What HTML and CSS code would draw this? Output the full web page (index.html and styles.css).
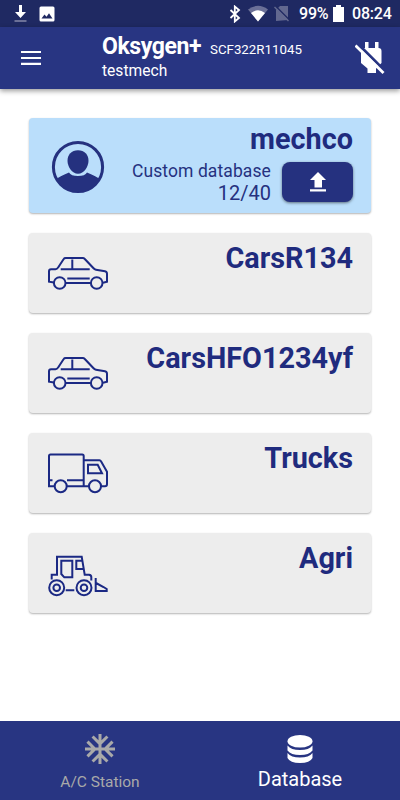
FILE: index.html
```html
<!DOCTYPE html>
<html lang="en">
<head>
    <meta charset="UTF-8">
    <title>Oksygen+</title>
    <link rel="stylesheet" href="styles.css">
</head>
<body>
<div class="status">
    <svg class="st-down" width="14" height="18" viewBox="0 0 14 18"><path d="M5 0h3v7h4l-5.500 6L1 7h4z" fill="#fff"/><path d="M.5 16h12" stroke="#6b7097" stroke-width="2"/></svg>
    <svg class="st-pic" width="16" height="16" viewBox="0 0 16 16"><rect x=".5" y=".5" width="15" height="15" rx="1.500" fill="#fff"/><path d="M2.500 12.500 5.500 8.500 7.500 10.800 10 7.200 13.500 12.500z" fill="#1f2962"/></svg>
    <svg class="st-bt" width="12" height="18" viewBox="0 0 12 18"><path d="M1.500 5 10 13 5.800 16.500V1.500L10 5 1.500 13" fill="none" stroke="#fff" stroke-width="1.800"/></svg>
    <svg class="st-wifi" width="20" height="17" viewBox="0 0 20 17"><path d="M0 4.500Q10-3 20 4.500L10 16.500z" fill="#6b7097"/><path d="M3 8Q10 2.500 17 8L10 16.500z" fill="#fff"/></svg>
    <svg class="st-sim" width="16" height="17" viewBox="0 0 16 17"><path d="M6 1h8v14L2 16V5z" fill="#62688f"/><path d="M1.500 1 15.500 15" stroke="#1f2962" stroke-width="1.500"/><path d="M.5 2 14.500 16" stroke="#62688f" stroke-width="1.500"/></svg>
    <span class="st-text">99%</span>
    <svg class="st-bat" width="11" height="17" viewBox="0 0 11 17"><path d="M3 0h5v2h3v15H0V2h3z" fill="#fff"/></svg>
    <span class="st-text">08:24</span>
</div>
<div class="header">
    <svg class="menu" width="20" height="14" viewBox="0 0 20 14"><path d="M0 1h20M0 7h20M0 12.800h20" stroke="#fff" stroke-width="2.200"/></svg>
    <div class="title">
        <div class="title-top"><b>Oksygen+</b><span>SCF322R11045</span></div>
        <div class="user">testmech</div>
    </div>
    <svg class="plug" width="30" height="32" viewBox="0 0 30 32">
        <path d="M10 0h3.500v6H20V0h3.500v6q3 0 3 3v12l-5.500 5.500v4.500h-8.500v-4.500L6 21V10q0-4 4-4z" fill="#fff"/>
        <path d="M1.500.5 30 29" stroke="#283582" stroke-width="3"/>
        <path d="M.5 3.500 28.500 31" stroke="#fff" stroke-width="2.800"/>
    </svg>
</div>
<div class="main">
    <div class="card custom">
        <svg class="avatar" width="54" height="54" viewBox="0 0 54 54">
            <circle cx="27" cy="27" r="24.600" fill="none" stroke="#25317f" stroke-width="3"/>
            <path d="M27 10.300c6.500 0 10.500 4.500 10.500 10.500S33 33.800 27 33.800 16.500 26.800 16.500 20.800 20.500 10.300 27 10.300z" fill="#25317f"/>
            <path d="M5.500 39Q8 36.500 18 32.500Q20 36 27 36T36 32.500Q46 36.500 48.500 39A24.600 24.600 0 0 1 5.500 39z" fill="#25317f"/>
        </svg>
        <div class="custom-info">
            <div class="name">mechco</div>
            <div class="custom-row">
                <div class="count">
                    <div class="label">Custom database</div>
                    <div class="num">12/40</div>
                </div>
                <div class="upload"><svg width="16" height="20" viewBox="0 0 16 20"><path d="M8 0 16 8h-4v7.500H4.500V8H0zM0 17.200h16v2.300H0z" fill="#fff"/></svg></div>
            </div>
        </div>
    </div>
    <div class="card">
        <svg class="icon" width="60" height="44" viewBox="0 0 60 44">
            <path d="M6 29.500 1 28.700V18.500Q1 16.300 3 16.300H7.500Q9 16.300 10.300 14.300L15.700 6Q16.300 5 17.700 5H34.700Q36 5 36.800 6L45.300 15Q46.500 16.400 48 16.700L57 18.300Q59 18.800 59 20.700V28.700L55 29.700M12.700 16.200H41.700M24.300 6.500V16M19.300 25.500H41.700M17.700 30H42.700"/>
            <circle cx="11.700" cy="30" r="5.800"/><circle cx="48.700" cy="30" r="5.800"/>
        </svg>
        <div class="name">CarsR134</div>
    </div>
    <div class="card">
        <svg class="icon" width="60" height="44" viewBox="0 0 60 44">
            <path d="M6 29.500 1 28.700V18.500Q1 16.300 3 16.300H7.500Q9 16.300 10.300 14.300L15.700 6Q16.300 5 17.700 5H34.700Q36 5 36.800 6L45.300 15Q46.500 16.400 48 16.700L57 18.300Q59 18.800 59 20.700V28.700L55 29.700M12.700 16.200H41.700M24.300 6.500V16M19.300 25.500H41.700M17.700 30H42.700"/>
            <circle cx="11.700" cy="30" r="5.800"/><circle cx="48.700" cy="30" r="5.800"/>
        </svg>
        <div class="name">CarsHFO1234yf</div>
    </div>
    <div class="card">
        <svg class="icon" width="60" height="44" viewBox="0 0 60 44">
            <path d="M6.500 33.200H1V3Q1 1.500 2.500 1.500H34.200Q35.700 1.500 35.700 3V33M35.700 7.300H51.500Q52.500 7.300 53 8.300L59 18.700V31Q59 33.200 57 33.200H53M1 27.300H4.500M19 27.300H35.700M19 33.200H41M40 11.700H49.700L54 20.300H40z"/>
            <circle cx="12.700" cy="33.300" r="6"/><circle cx="47" cy="33.300" r="6"/>
        </svg>
        <div class="name">Trucks</div>
    </div>
    <div class="card">
        <svg class="icon" width="60" height="44" viewBox="0 0 60 44">
            <path d="M3.700 26.500V21.700H9V3.700H33.700L36.700 21.700H41Q43.300 22 43.300 24V27.500M13.300 7.700H24.300V24.300H16.300L13.300 21zM33.700 7.700H28.300V16H35.500M17.700 37.300H26.300M47.700 25V38H58.700V36L55.500 34 48 30"/>
            <circle cx="8.700" cy="34.700" r="7.500"/><circle cx="36" cy="34.700" r="7.500"/>
            <circle cx="8.700" cy="34.700" r="3.300"/><circle cx="36" cy="34.700" r="3.300"/>
        </svg>
        <div class="name">Agri</div>
    </div>
</div>
<div class="nav">
    <div class="tab">
        <svg width="30" height="30" viewBox="2 2 20 20"><path d="M22 11h-4.170l3.240-3.240-1.410-1.420L15 11h-2V9l4.660-4.660-1.420-1.410L13 6.170V2h-2v4.170L7.760 2.930 6.340 4.340 11 9v2H9L4.340 6.340 2.930 7.760 6.170 11H2v2h4.170l-3.240 3.240 1.410 1.420L9 13h2v2l-4.660 4.660 1.420 1.410L11 17.830V22h2v-4.170l3.240 3.240 1.420-1.410L13 15v-2h2l4.660 4.660 1.410-1.420L17.830 13H22z" fill="#a9a9a9"/></svg>
        <span>A/C Station</span>
    </div>
    <div class="tab active">
        <svg width="26" height="28" viewBox="0 0 26 28"><ellipse cx="13" cy="6.300" rx="12.500" ry="6.300" fill="#fff"/><path d="M.5 10.500Q4 15 13 15T25.500 10.500V15.500Q22 20 13 20T.5 15.500zM.5 18Q4 22.500 13 22.500T25.500 18V23Q23 28 13 28T.5 23z" fill="#fff"/></svg>
        <span>Database</span>
    </div>
</div>
</body>
</html>
```
FILE: styles.css
```css
*{
    margin: 0;
    padding: 0;
    box-sizing: border-box;
}
body{
    width: 400px;
    height: 800px;
    display: flex;
    flex-direction: column;
    background: #fff;
    font-family: Roboto, sans-serif;
    overflow: hidden;
}
svg{
    display: block;
    flex-shrink: 0;
}
.status{
    height: 27px;
    padding-left: 14px;
    display: flex;
    align-items: center;
    background: #1f2962;
    color: #fff;
}
.st-pic{
    margin-left: 11px;
}
.st-bt{
    margin-left: 174px;
}
.st-wifi{
    margin-left: 7px;
}
.st-sim{
    margin-left: 6px;
}
.st-text{
    width: 29px;
    margin-left: 9px;
    font-size: 16px;
    font-weight: 500;
    line-height: 29px;
    letter-spacing: -.2px;
    white-space: nowrap;
}
.st-bat{
    margin-left: 5px;
}
.st-bat + .st-text{
    margin-left: 8px;
}
.header{
    height: 62px;
    display: flex;
    background: #283582;
    color: #fff;
    box-shadow: 0 2px 5px rgba(0,0,0,.4);
}
.menu{
    margin: 24px 0 0 21px;
}
.title{
    width: 253px;
    margin: 6px 0 0 61px;
}
.title-top{
    display: flex;
    align-items: baseline;
    line-height: 27px;
}
.title-top b{
    width: 108px;
    font-size: 23px;
    font-weight: 700;
    letter-spacing: -.4px;
}
.title-top span{
    font-size: 13.3px;
}
.user{
    margin-top: -2px;
    font-size: 15.6px;
    line-height: 20px;
}
.plug{
    margin-top: 15px;
}
.main{
    flex: 1;
    padding: 29px 29px 0;
    display: flex;
    flex-direction: column;
    gap: 20px;
}
.card{
    height: 80px;
    padding: 0 18px 0 19px;
    display: flex;
    justify-content: space-between;
    background: #ededed;
    border-radius: 4px;
    box-shadow: 0 1px 2px rgba(0,0,0,.3);
}
.custom{
    height: 95px;
    background: #badefb;
}
.name{
    margin-top: 7px;
    color: #1f2b7e;
    font-size: 28.8px;
    font-weight: 700;
    line-height: 36px;
    text-align: right;
}
.icon{
    margin-top: 20px;
    fill: none;
    stroke: #1b2984;
    stroke-width: 2;
}
.avatar{
    margin: 22px 0 0 3px;
}
.custom-info .name{
    margin-top: 3px;
}
.custom-row{
    display: flex;
    justify-content: flex-end;
    gap: 11px;
    margin-top: 3px;
}
.count{
    color: #25317f;
    text-align: right;
}
.label{
    font-size: 17.5px;
    line-height: 22px;
    letter-spacing: .1px;
}
.num{
    font-size: 20px;
    line-height: 23px;
}
.upload{
    width: 71px;
    height: 40px;
    margin-top: 2px;
    display: flex;
    align-items: center;
    justify-content: center;
    background: #25317f;
    border-radius: 8px;
    box-shadow: 0 1px 3px rgba(0,0,0,.5);
}
.nav{
    height: 79px;
    display: flex;
    background: #283582;
}
.tab{
    width: 50%;
    padding-top: 13px;
    display: flex;
    flex-direction: column;
    align-items: center;
    color: #a9a9a9;
    font-size: 15.5px;
    line-height: 20px;
}
.tab span{
    margin-top: 8px;
}
.active{
    padding-top: 14px;
    color: #fff;
    font-size: 20px;
}
.active span{
    margin-top: 6px;
}
```
